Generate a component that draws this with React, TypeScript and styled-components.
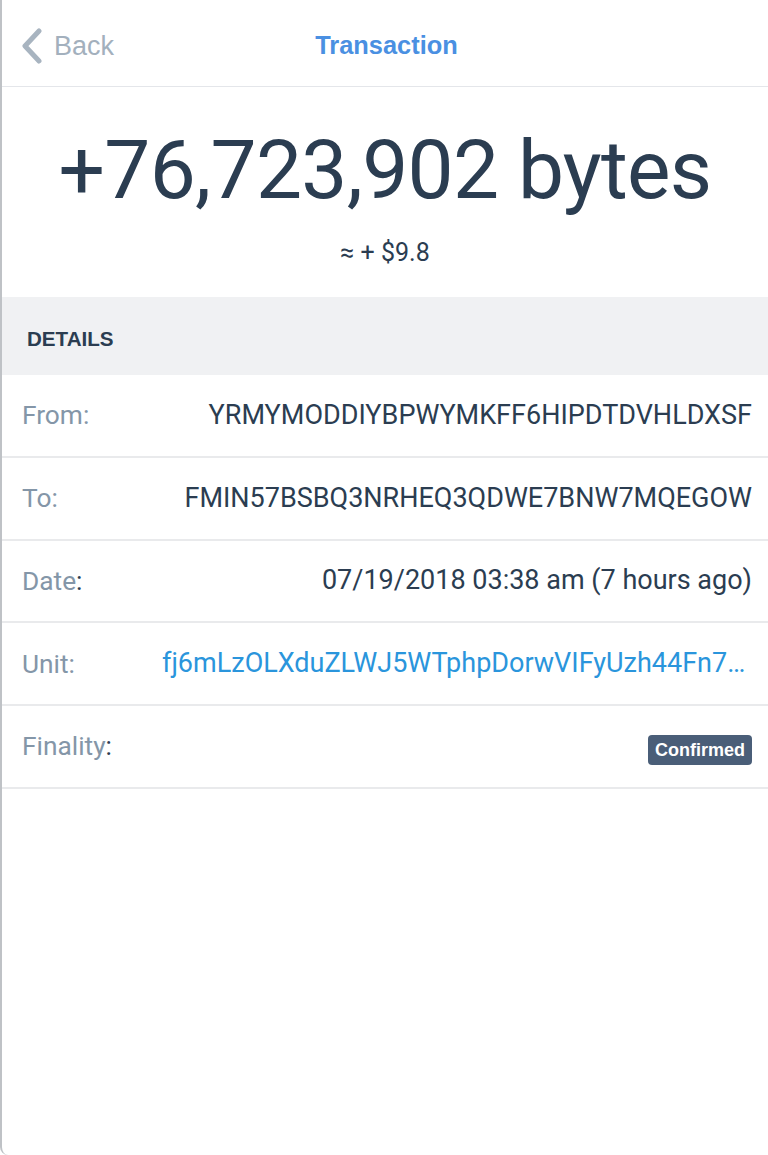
import styled, { createGlobalStyle } from 'styled-components'

const GlobalStyle = createGlobalStyle`
  html, body { margin: 0; padding: 0; background: #fff; }
  body { font-family: Roboto, "Liberation Sans", sans-serif; -webkit-font-smoothing: antialiased; }
`

const Panel = styled.div`
  min-height: 1155px; box-sizing: border-box;
  border-left: 2px solid #bfc2c6; border-bottom-left-radius: 8px;
  background: #fff; overflow: hidden;
`
const Header = styled.header`
  display: grid; grid-template-columns: 1fr auto 1fr; align-items: center;
  height: 87px; box-sizing: border-box; padding: 6px 16px 0 19px;
  border-bottom: 1px solid #e4e6ea;
`
const BackButton = styled.button`
  display: flex; align-items: center; gap: 11px; justify-self: start;
  background: none; border: none; padding: 0; cursor: pointer;
  font-family: "Liberation Sans", Arial, sans-serif; font-size: 27px; line-height: 1;
  color: #a3b0bd;
`
const Title = styled.h1`
  margin: 0; font-family: "Liberation Sans", Arial, sans-serif;
  font-size: 25.4px; font-weight: 700; line-height: 1; color: #4a90e2;
`
const Summary = styled.section`
  display: flex; flex-direction: column; align-items: center;
  padding: 42px 0 32px;
`
const Amount = styled.div`
  font-size: 82px; line-height: 1; color: #2b3d51; letter-spacing: -0.7px;
`
const Fiat = styled.div`
  margin-top: 29px; font-size: 25px; line-height: 1; color: #2b3d51;
`
const SectionHead = styled.div`
  display: flex; align-items: center; height: 78px; box-sizing: border-box;
  padding: 6px 25px 0; background: #f0f1f3;
  font-family: "Liberation Sans", Arial, sans-serif; font-size: 20.6px; font-weight: 700;
  color: #2b3d51;
`
const Row = styled.div`
  display: flex; align-items: center; height: 82.75px; box-sizing: border-box;
  padding: 0 16px 0 20px; border-bottom: 2px solid #e9eaec;
`
const Label = styled.div`
  flex: 0 0 auto; width: 140px; font-size: 26.3px; line-height: 1.3; color: #8496a8;
`
const Colon = styled.span<{ $dark?: boolean }>`
  color: ${({ $dark }) => ($dark ? '#2b3d51' : 'inherit')};
`
const Value = styled.div<{ $link?: boolean }>`
  flex: 1; min-width: 0; text-align: right; font-size: 27px; line-height: 1.3;
  white-space: nowrap; overflow: hidden; text-overflow: ellipsis;
  color: ${({ $link }) => ($link ? '#2a95dc' : '#2b3d51')};
`
const BadgeCell = styled.div`
  flex: 1; display: flex; justify-content: flex-end; padding-top: 8px;
`
const Badge = styled.span`
  display: inline-flex; align-items: center; height: 30px; padding: 0 7px;
  box-sizing: border-box; border-radius: 4px; background: #4a5e78; color: #fff;
  font-family: "Liberation Sans", Arial, sans-serif; font-size: 18px; font-weight: 700;
`

function Chevron() {
  return (
    <svg width="22" height="36" viewBox="0 0 22 36" fill="none">
      <polyline points="18,3 4,18 18,33" stroke="#a8b4c0" strokeWidth="5" strokeLinecap="round" strokeLinejoin="round" />
    </svg>
  )
}

const rows = [
  { label: 'From', value: 'YRMYMODDIYBPWYMKFF6HIPDTDVHLDXSF' },
  { label: 'To', value: 'FMIN57BSBQ3NRHEQ3QDWE7BNW7MQEGOW' },
  { label: 'Date', value: '07/19/2018 03:38 am (7 hours ago)', dark: true },
  { label: 'Unit', value: 'fj6mLzOLXduZLWJ5WTphpDorwVIFyUzh44Fn7Xq2rKc0Yp8=', link: true },
]

export default function App() {
  return (
    <Panel>
      <GlobalStyle />
      <Header>
        <BackButton><Chevron />Back</BackButton>
        <Title>Transaction</Title>
        <span />
      </Header>
      <Summary>
        <Amount>+76,723,902 bytes</Amount>
        <Fiat>≈ + $9.8</Fiat>
      </Summary>
      <SectionHead>DETAILS</SectionHead>
      {rows.map((r) => (
        <Row key={r.label}>
          <Label>{r.label}<Colon $dark={r.dark}>:</Colon></Label>
          <Value $link={r.link}>{r.value}</Value>
        </Row>
      ))}
      <Row>
        <Label>Finality<Colon $dark>:</Colon></Label>
        <BadgeCell><Badge>Confirmed</Badge></BadgeCell>
      </Row>
    </Panel>
  )
}
